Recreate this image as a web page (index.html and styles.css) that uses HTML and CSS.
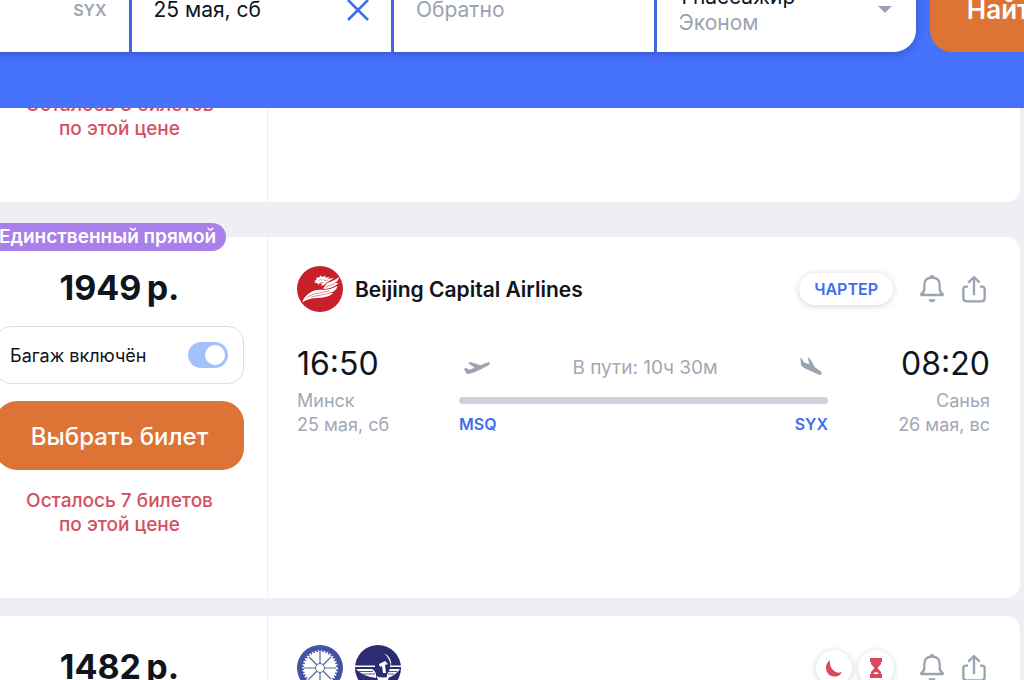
FILE: index.html
```
<!DOCTYPE html>
<html lang="ru">
<head>
    <meta charset="UTF-8">
    <meta name="viewport" content="width=device-width, initial-scale=1.0">
    <title>Авиабилеты Минск — Санья</title>
    <link rel="stylesheet" href="styles.css">
</head>
<body>
    <svg class="sprite" aria-hidden="true">
        <symbol id="bell" viewBox="0 0 72 84">
            <path d="M4 60V57Q13 51 13 42V30Q13 8 36 8Q59 8 59 30V42Q59 51 68 57V60Z" fill="none" stroke="currentColor" stroke-width="7" stroke-linejoin="round"/>
            <path d="M30 1H42V8H30ZM25 73H47Q44 82 36 82Q28 82 25 73Z" fill="currentColor"/>
        </symbol>
        <symbol id="share" viewBox="0 0 72 84">
            <path d="M18 35H12Q4 35 4 43V69Q4 79 14 79H58Q68 79 68 69V43Q68 35 60 35H54M36 61V7M19 23L36 6L53 23" fill="none" stroke="currentColor" stroke-width="7" stroke-linejoin="round"/>
        </symbol>
    </svg>

    <header class="header">
        <form class="search">
            <div class="fields">
                <div class="field field-city">
                    <span class="code">SYX</span>
                </div>
                <div class="field">
                    <input type="text" class="field-input" aria-label="Туда" value="25 мая, сб">
                    <button type="button" class="clear" aria-label="Очистить">
                        <svg viewBox="0 0 22 22" width="22" height="22"><path d="M1 1L21 21M21 1L1 21" stroke="currentColor" stroke-width="2.6"/></svg>
                    </button>
                </div>
                <div class="field">
                    <input type="text" class="field-input" aria-label="Обратно" placeholder="Обратно">
                </div>
                <button type="button" class="field passengers">
                    <span class="passengers-text">
                        <span>1 пассажир</span>
                        <span class="muted">Эконом</span>
                    </span>
                    <svg viewBox="0 0 14 8" width="14" height="8"><path d="M0 0H14L7 7Z" fill="#9ba3b2"/></svg>
                </button>
            </div>
            <button type="submit" class="search-button">Найти</button>
        </form>
    </header>

    <main class="results">
        <article class="ticket ticket-top">
            <div class="side">
                <p class="left-count">Осталось 3 билетов<br>по этой цене</p>
            </div>
            <div class="info"></div>
        </article>

        <article class="ticket ticket-badged">
            <span class="badge">Единственный прямой</span>
            <div class="side">
                <div class="price">1949&thinsp;р.</div>
                <label class="baggage" for="baggage">
                    Багаж включён
                    <input type="checkbox" id="baggage" class="switch" checked>
                </label>
                <button type="button" class="select-button">Выбрать билет</button>
                <p class="left-count">Осталось 7 билетов<br>по этой цене</p>
            </div>
            <div class="info">
                <div class="info-head">
                    <svg class="logo" viewBox="21 23 138 138">
                        <circle cx="90" cy="92" r="69" fill="#c8202b"/>
                        <g fill="#fff">
                            <path d="M37 132C43 113 58 102 76 96C92 92 108 96 122 91L143 83C140 94 131 101 119 104L130 105C115 117 96 119 78 119C60 120 47 125 37 132Z"/>
                            <path d="M99 91C104 84 108 80 111 74C124 71 137 64 147 56C146 66 141 71 134 74L145 74C137 84 123 89 110 91Z"/>
                            <path d="M72 68L79 65L80 57L87 58L92 51L96 56L107 52L105 58L119 56L114 62L132 59L118 68L109 73L103 80L92 82L97 76L89 75L85 79L82 74L72 74L78 70Z"/>
                        </g>
                        <g fill="none" stroke="#c8202b" stroke-width="1.5">
                            <path d="M50 119C66 105 86 106 119 97M64 117C81 110 99 111 123 103M107 87C117 81 127 80 136 74M85 67L93 63L96 68M100 62L104 67L114 65M89 74L102 72"/>
                        </g>
                    </svg>
                    <h2 class="airline">Beijing Capital Airlines</h2>
                    <span class="charter">ЧАРТЕР</span>
                    <button type="button" class="icon-button" aria-label="Следить за ценой"><svg><use href="#bell"/></svg></button>
                    <button type="button" class="icon-button" aria-label="Поделиться"><svg><use href="#share"/></svg></button>
                </div>
                <div class="route">
                    <div class="point">
                        <div class="time">16:50</div>
                        <div>Минск</div>
                        <div>25 мая, сб</div>
                    </div>
                    <div class="path">
                        <div class="path-top">
                            <svg viewBox="0 0 78 40" width="26" height="14"><path d="M0 22L7 20L16 25L32 19L12 5L20 2L49 12L68 4Q77 1 78 6Q78 10 70 14L34 32L14 38Q9 39 6 34Z" fill="#9ba3b2"/></svg>
                            <span>В пути: 10ч 30м</span>
                            <svg viewBox="0 0 68 56" width="22" height="19" class="landing"><path d="M1 2L6 4L12 15L29 22L24 1L31 4L47 31L62 41Q69 47 66 52Q64 56 57 53L17 35Q5 29 3 22Z" fill="#9ba3b2"/></svg>
                        </div>
                        <div class="bar"></div>
                        <div class="codes">
                            <span>MSQ</span>
                            <span>SYX</span>
                        </div>
                    </div>
                    <div class="point point-end">
                        <div class="time">08:20</div>
                        <div>Санья</div>
                        <div>26 мая, вс</div>
                    </div>
                </div>
            </div>
        </article>

        <article class="ticket">
            <div class="side">
                <div class="price">1482&thinsp;р.</div>
            </div>
            <div class="info">
                <div class="info-head">
                    <svg class="logo" viewBox="0 0 46 46">
                        <circle cx="23" cy="23" r="23" fill="#4453a4"/>
                        <circle cx="23" cy="23" r="16" fill="#fff"/>
                        <circle cx="23" cy="23" r="16.5" fill="none" stroke="#fff" stroke-width="2.4" stroke-dasharray="1.6 1.4"/>
                        <path d="M23 7V39M7 23H39M12 12L34 34M34 12L12 34" stroke="#5c678f" stroke-width="1.2"/>
                        <circle cx="23" cy="23" r="4.5" fill="#fff" stroke="#5c678f"/>
                    </svg>
                    <svg class="logo" viewBox="0 0 46 46">
                        <circle cx="23" cy="23" r="23" fill="#2b2c72"/>
                        <path d="M0 20.5H20V22H0ZM35 20.5H46V22H35Z" fill="#fff"/>
                        <path d="M1 24H16Q19 24 21 29V33Q7 31 1 24ZM45 24H35Q32 24 32 29V33Q40 31 45 24Z" fill="#fff"/>
                        <path d="M4 26.5H18M8 29H20M42 26.5H33M39 29H33" stroke="#2b2c72" stroke-width=".8"/>
                        <path d="M29 8Q38 13 36 23Q36 15 29 8Z" fill="#fff"/>
                        <circle cx="28" cy="24" r="6.500" fill="#2b2c72"/>
                        <path d="M24 19L30 16L33 19L30 20L31 28H28L27 21L25 22Z" fill="#fff"/>
                        <path d="M21 31Q28 34 35 31L33 34L36 40H20L23 34Z" fill="#fff"/>
                    </svg>
                    <span class="spacer"></span>
                    <span class="round">
                        <svg viewBox="0 0 18 18" width="18" height="18"><path d="M5 1Q1 4 1 9A8.500 8.500 0 0 0 17 13Q12 15 8 11Q4 7 5 1Z" fill="#d9485b"/></svg>
                    </span>
                    <span class="round">
                        <svg viewBox="0 0 14 20" width="14" height="20"><path d="M1 0H13V4H12V6L8.500 10L12 14V16H13V20H1V16H2V14L5.500 10L2 6V4H1Z" fill="#d9485b"/><path d="M4 16Q7 12 10 16Z" fill="#fff"/></svg>
                    </span>
                    <button type="button" class="icon-button" aria-label="Следить за ценой"><svg><use href="#bell"/></svg></button>
                    <button type="button" class="icon-button" aria-label="Поделиться"><svg><use href="#share"/></svg></button>
                </div>
            </div>
        </article>
    </main>
</body>
</html>
```
FILE: styles.css
```
* {
    box-sizing: border-box;
}

body {
    font-family: Inter, "Liberation Sans", sans-serif;
    font-size: 18px;
    background-color: #eeeff4;
    color: #10141c;
    margin: 0;
    height: 100vh;
    overflow: hidden;
}

button,
input {
    font-family: inherit;
    border: none;
    padding: 0;
    background: none;
}

button {
    cursor: pointer;
}

.sprite {
    display: none;
}

/* search bar, scrolled partly out of view */
.header {
    position: relative;
    z-index: 1;
    background-color: #4571fb;
    margin-top: -33px;
    padding-bottom: 56px;
}

.search {
    display: flex;
    gap: 14px;
    margin: 0 -59px 0 -131px;
}

.fields {
    flex: 1;
    display: grid;
    grid-template-columns: repeat(4, minmax(0, 1fr));
    gap: 3px;
    background-color: #3f69e4;
    border-radius: 22px;
    box-shadow: 0 2px 8px rgba(30, 50, 130, 0.4);
    overflow: hidden;
}

.field {
    display: flex;
    align-items: center;
    justify-content: space-between;
    height: 85px;
    padding: 0 22px;
    background-color: #fff;
}

.field-city {
    justify-content: flex-end;
}

.code {
    font-size: 16px;
    font-weight: 600;
    color: #9ba3b2;
}

.field-input {
    flex: 1;
    min-width: 0;
    font-size: 21px;
    color: #10141c;
}

.field-input::placeholder {
    color: #9ba3b2;
}

.clear {
    display: flex;
    color: #3f6df0;
}

.passengers {
    padding: 0 24px 0 22px;
    font-size: 21px;
    line-height: 26px;
    text-align: left;
    white-space: nowrap;
    color: #10141c;
}

.passengers-text {
    display: flex;
    flex-direction: column;
}

.muted {
    color: #9ba3b2;
}

.search-button {
    width: 153px;
    background-color: #dd7435;
    border-radius: 22px;
    color: #fff;
    font-size: 26px;
    font-weight: 600;
}

/* tickets */
.results {
    display: flex;
    flex-direction: column;
    gap: 18px;
    margin: -20px 4px 0 -29px;
}

.ticket {
    position: relative;
    display: flex;
    flex-shrink: 0;
    min-height: 361px;
    background-color: #fff;
    border-radius: 14px;
}

.ticket-top {
    min-height: 114px;
}

.ticket-top .side {
    padding-top: 0;
}

.ticket-badged {
    margin-top: 17px;
}

.side {
    flex: 0 0 297px;
    padding: 28px 23px 0 24px;
    border-right: 1px solid #eeeff2;
    text-align: center;
}

.badge {
    position: absolute;
    top: -14px;
    left: 10px;
    padding: 0 10px 0 18px;
    border-radius: 14px;
    background-color: #a97fea;
    color: #fff;
    font-size: 19px;
    font-weight: 600;
    line-height: 28px;
}

.price {
    font-size: 34px;
    font-weight: 700;
    line-height: 46px;
}

.baggage {
    display: flex;
    align-items: center;
    justify-content: space-between;
    height: 58px;
    margin-top: 15px;
    padding: 0 15px 0 14px;
    border: 1px solid #dcdee3;
    border-radius: 16px;
}

.switch {
    appearance: none;
    display: flex;
    justify-content: flex-end;
    width: 40px;
    height: 26px;
    margin: 0;
    padding: 3px;
    border-radius: 13px;
    background-color: #a5c1fb;
}

.switch::before {
    content: "";
    width: 20px;
    height: 20px;
    border-radius: 50%;
    background-color: #fff;
}

.select-button {
    width: 100%;
    height: 69px;
    margin-top: 17px;
    padding-top: 2px;
    border-radius: 22px;
    background-color: #dd7435;
    color: #fff;
    font-size: 24px;
    font-weight: 500;
}

.left-count {
    margin: 19px 0 0;
    font-size: 19px;
    font-weight: 500;
    line-height: 24px;
    color: #d5505f;
}

.ticket-top .left-count {
    margin-top: 5px;
}

.info {
    flex: 1;
    padding: 29px 30px 0 29px;
}

.info-head {
    display: flex;
    align-items: center;
    gap: 12px;
    padding-right: 1px;
}

.logo {
    width: 46px;
    height: 46px;
}

.airline {
    flex: 1;
    margin: 0;
    font-size: 21px;
    font-weight: 600;
}

.spacer {
    flex: 1;
}

.charter {
    margin-right: 12px;
    padding: 0 15px;
    border-radius: 16px;
    box-shadow: 0 1px 6px rgba(20, 30, 60, 0.2);
    color: #3f6df0;
    font-size: 16px;
    font-weight: 600;
    line-height: 32px;
}

.round {
    display: flex;
    align-items: center;
    justify-content: center;
    width: 36px;
    height: 36px;
    margin-right: -6px;
    border-radius: 50%;
    box-shadow: 0 1px 6px rgba(20, 30, 60, 0.2);
}

.round + .icon-button {
    margin-left: 17px;
}

.icon-button {
    display: flex;
    width: 30px;
    justify-content: center;
    color: #9ba3b2;
}

.icon-button svg {
    width: 24px;
    height: 28px;
}

.route {
    display: grid;
    grid-template-columns: 162px 1fr 162px;
    margin-top: 32px;
    color: #a2a8b5;
    line-height: 24px;
}

.point-end {
    text-align: right;
}

.time {
    margin-bottom: 5px;
    color: #10141c;
    font-size: 32px;
    line-height: 40px;
}

.path-top {
    display: flex;
    align-items: center;
    justify-content: space-between;
    height: 40px;
    padding: 8px 6px 0 5px;
    font-size: 19px;
}

.landing {
    margin-bottom: 4px;
}

.bar {
    height: 7px;
    margin: 13px 0 8px;
    border-radius: 4px;
    background-color: #cdd1db;
}

.codes {
    display: flex;
    justify-content: space-between;
    color: #3f6df0;
    font-size: 16px;
    font-weight: 600;
}
```
